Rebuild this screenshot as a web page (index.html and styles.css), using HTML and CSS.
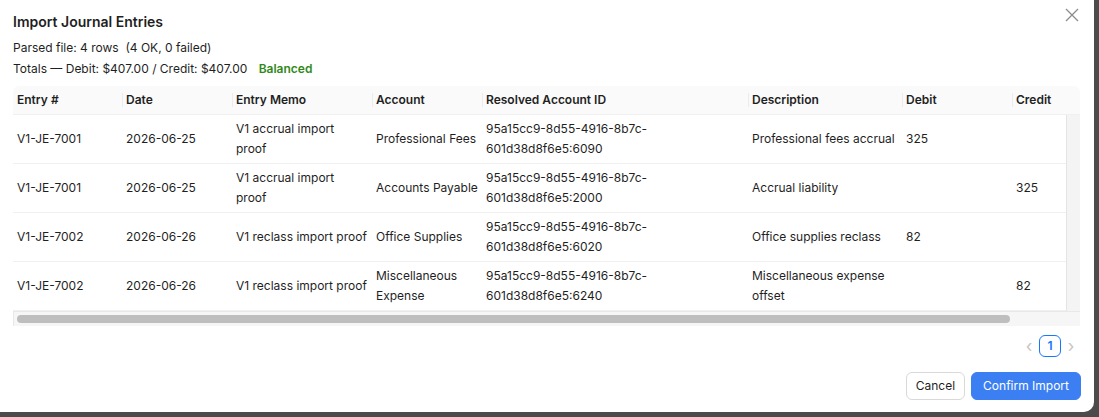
FILE: index.html
```html
<!DOCTYPE html>
<html lang="en">

<head>
  <meta charset="UTF-8" />
  <meta name="viewport" content="width=device-width, initial-scale=1.0">
  <title>Import Journal Entries</title>
  <link rel="stylesheet" href="styles.css">
</head>

<body>
  <div class="modal">
    <button type="button" class="btn-close" aria-label="Close">
      <svg width="14" height="14" viewBox="0 0 14 14"><path d="M1 1L13 13M13 1L1 13" stroke="#8c8c8c" stroke-width="1.3" fill="none"/></svg>
    </button>

    <h2>Import Journal Entries</h2>
    <div class="meta">
      <div>Parsed file: 4 rows&nbsp; (4 OK, 0 failed)</div>
      <div>Totals — Debit: $407.00 / Credit: $407.00 <span class="ok">Balanced</span></div>
    </div>

    <div class="grid">
      <div class="grid-head">
        <table>
          <colgroup>
            <col style="width:109px"><col style="width:110px"><col style="width:140px"><col style="width:110px">
            <col style="width:266px"><col style="width:154px"><col style="width:110px"><col style="width:110px">
          </colgroup>
          <thead>
            <tr>
              <th>Entry #</th>
              <th>Date</th>
              <th>Entry Memo</th>
              <th>Account</th>
              <th>Resolved Account ID</th>
              <th>Description</th>
              <th>Debit</th>
              <th>Credit</th>
            </tr>
          </thead>
        </table>
      </div>
      <div class="grid-main">
        <div class="grid-body">
          <table>
            <colgroup>
              <col style="width:109px"><col style="width:110px"><col style="width:140px"><col style="width:110px">
              <col style="width:266px"><col style="width:154px"><col style="width:110px"><col style="width:110px">
            </colgroup>
            <tbody>
              <tr>
                <td>V1-JE-7001</td>
                <td>2026-06-25</td>
                <td>V1 accrual import proof</td>
                <td>Professional Fees</td>
                <td>95a15cc9-8d55-4916-8b7c-<br>601d38d8f6e5:6090</td>
                <td>Professional fees accrual</td>
                <td>325</td>
                <td></td>
              </tr>
              <tr>
                <td>V1-JE-7001</td>
                <td>2026-06-25</td>
                <td>V1 accrual import proof</td>
                <td>Accounts Payable</td>
                <td>95a15cc9-8d55-4916-8b7c-<br>601d38d8f6e5:2000</td>
                <td>Accrual liability</td>
                <td></td>
                <td>325</td>
              </tr>
              <tr>
                <td>V1-JE-7002</td>
                <td>2026-06-26</td>
                <td>V1 reclass import proof</td>
                <td>Office Supplies</td>
                <td>95a15cc9-8d55-4916-8b7c-<br>601d38d8f6e5:6020</td>
                <td>Office supplies reclass</td>
                <td>82</td>
                <td></td>
              </tr>
              <tr>
                <td>V1-JE-7002</td>
                <td>2026-06-26</td>
                <td>V1 reclass import proof</td>
                <td>Miscellaneous Expense</td>
                <td>95a15cc9-8d55-4916-8b7c-<br>601d38d8f6e5:6240</td>
                <td>Miscellaneous expense offset</td>
                <td></td>
                <td>82</td>
              </tr>
            </tbody>
          </table>
        </div>
        <div class="vbar"></div>
      </div>
      <div class="hbar">
        <div class="hbar-thumb"></div>
      </div>
    </div>

    <div class="pager">
      <span class="pager-arrow">&lsaquo;</span>
      <span class="pager-item">1</span>
      <span class="pager-arrow">&rsaquo;</span>
    </div>

    <div class="footer">
      <button type="button" class="btn-cancel">Cancel</button>
      <button type="button" class="btn-confirm">Confirm Import</button>
    </div>
  </div>
</body>

</html>
```

FILE: styles.css
```css
* {
  box-sizing: border-box;
}

body {
  margin: 0;
  font-family: 'Inter', sans-serif;
  font-size: 12px;
  color: #1f1f1f;
  background-color: #4b4b4b;
  height: 417px;
  overflow: hidden;
}

.modal {
  position: relative;
  width: 1094px;
  height: 412px;
  background-color: #ffffff;
  border-radius: 0 0 10px 0;
  padding: 12px 13px;
}

.btn-close {
  position: absolute;
  top: 8px;
  right: 15px;
  width: 14px;
  height: 14px;
  padding: 0;
  border: none;
  background: none;
  cursor: pointer;
}

h2 {
  margin: 0;
  font-size: 14px;
  line-height: 20px;
  font-weight: 600;
}

.meta {
  margin-top: 5px;
  line-height: 21px;
}

.ok {
  margin-left: 8px;
  color: #32891a;
  font-weight: 600;
}

.grid {
  margin-top: 7px;
  width: 1067px;
}

table {
  border-collapse: collapse;
  table-layout: fixed;
  width: 1109px;
}

.grid-head {
  overflow: hidden;
  background-color: #fafafa;
  border-radius: 6px 6px 0 0;
}

th {
  position: relative;
  height: 28px;
  padding: 0 4px;
  text-align: left;
  font-weight: 600;
  border-bottom: 1px solid #f0f0f0;
}

th + th::before {
  content: "";
  position: absolute;
  left: 0;
  top: 7px;
  height: 14px;
  width: 1px;
  background-color: #ececec;
}

.grid-main {
  display: flex;
}

.grid-body {
  width: 1053px;
  height: 196px;
  overflow: hidden;
}

.vbar {
  flex: 1;
  background-color: #f4f4f4;
  border-left: 1px solid #e4e4e4;
}

.hbar {
  height: 15px;
  padding: 3px 0 0 3px;
  background-color: #f6f6f6;
  border-top: 1px solid #e8e8e8;
  border-left: 1px solid #e8e8e8;
}

.hbar-thumb {
  width: 993px;
  height: 8px;
  border-radius: 4px;
  background-color: #bebebe;
}

td {
  height: 49px;
  padding: 4px 4px;
  line-height: 20px;
  border-bottom: 1px solid #f0f0f0;
  vertical-align: middle;
}

.pager {
  display: flex;
  justify-content: flex-end;
  align-items: center;
  gap: 6px;
  margin-top: 9px;
  padding-right: 6px;
}

.pager-arrow {
  width: 8px;
  font-size: 17px;
  color: #c4c4c4;
  text-align: center;
  line-height: 22px;
}

.pager-item {
  width: 22px;
  height: 22px;
  border: 1px solid #1677ff;
  border-radius: 6px;
  color: #1677ff;
  font-weight: 600;
  text-align: center;
  line-height: 20px;
}

.footer {
  display: flex;
  justify-content: flex-end;
  gap: 6px;
  margin-top: 15px;
}

.footer button {
  height: 28px;
  padding: 0 11px;
  border-radius: 6px;
  font-family: 'Inter', sans-serif;
  font-size: 12px;
  cursor: pointer;
}

.footer .btn-cancel {
  padding: 0 9px;
  background-color: #ffffff;
  border: 1px solid #d9d9d9;
  color: #1f1f1f;
}

.btn-confirm {
  background-color: #3b7ff2;
  border: 1px solid #3b7ff2;
  color: #ffffff;
}
```
